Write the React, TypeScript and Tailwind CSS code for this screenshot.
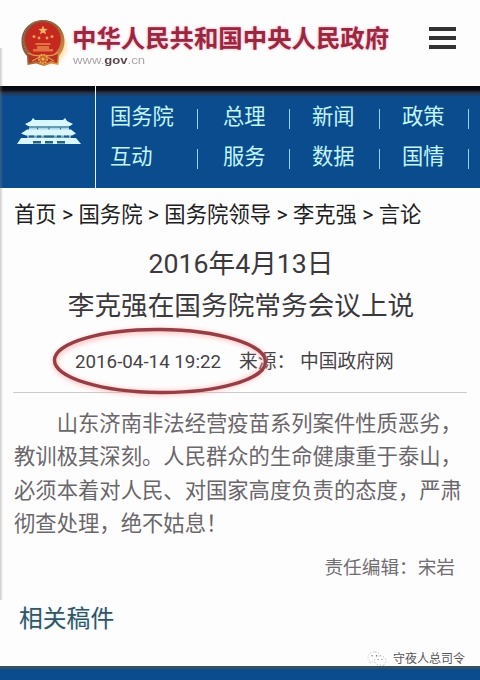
import React from "react";

const cjk = "font-['Roboto','Noto_Sans_CJK_SC',sans-serif]";

const navRows = [
  ["国务院", "总理", "新闻", "政策"],
  ["互动", "服务", "数据", "国情"],
];

const bodyLines = [
  "山东济南非法经营疫苗系列案件性质恶劣，",
  "教训极其深刻。人民群众的生命健康重于泰山，",
  "必须本着对人民、对国家高度负责的态度，严肃",
  "彻查处理，绝不姑息！",
];

function Emblem() {
  return (
    <svg width="50" height="52" viewBox="0 0 50 52" className="shrink-0">
      <defs>
        <linearGradient id="rim" x1="0" y1="0" x2="1" y2="1">
          <stop offset="0" stopColor="#6f5a4c" />
          <stop offset="0.5" stopColor="#9c5d38" />
          <stop offset="1" stopColor="#f2a347" />
        </linearGradient>
        <filter id="soft" x="-20%" y="-20%" width="140%" height="140%">
          <feGaussianBlur stdDeviation="1.8" />
        </filter>
      </defs>
      <ellipse cx="27" cy="28" rx="20" ry="19" fill="#ffd58a" opacity="0.6" filter="url(#soft)" />
      <path d="M23 2C35 2 44.500 11 44.500 23C44.500 30 42 34 39 38L38.500 47L31 45.500L24 48L16 45.500L7.500 47L7 38C3 34 1.500 29 1.500 23C1.500 11 11 2 23 2Z" fill="url(#rim)" />
      <circle cx="23" cy="22" r="19.500" fill="none" stroke="#c07a3c" strokeWidth="0.900" strokeDasharray="2 1.500" />
      <circle cx="23" cy="22" r="17.800" fill="#c4281f" />
      <path d="M23 7.500l1.300 3.200 3.400.2-2.600 2.100 1 3.300-3.100-1.900-3 1.900.9-3.300-2.600-2.100 3.400-.2z" fill="#ffb469" />
      <g fill="#f39a55">
        <circle cx="14" cy="18.500" r="1.500" /><circle cx="19" cy="20" r="1.400" />
        <circle cx="27" cy="20" r="1.400" /><circle cx="32" cy="18.500" r="1.500" />
        <path d="M16 25h14l1 2H15zM17 28h12v3h4v2.500H13V31h4z" opacity=".65" />
      </g>
      <path d="M8 35Q15 40 23 35Q31 40 38 35L37 45L31 43L24 46L16 43L9 45Z" fill="#b53322" />
      <path d="M8 35Q15 39 23 37Q31 39 38 35M12 43L20 39M34 43L27 39" fill="none" stroke="#e09848" strokeWidth="1.300" />
      <circle cx="23" cy="41" r="4.200" fill="#c9662b" stroke="#f2a94f" strokeWidth="1.600" strokeDasharray="1.800 1" />
      <circle cx="23" cy="41" r="1.500" fill="#f2b254" />
    </svg>
  );
}

function Gate() {
  return (
    <svg width="66" height="28" viewBox="0 0 66 28">
      <g fill="#d8f7ff">
        <path d="M17 1L19 3H47L49 1L51 4L57 7L54 9H12L9 7L15 4Z" />
        <path d="M13 9H53V13H13Z" opacity=".8" />
        <path d="M11 12.500H55L60 16.500L56 18.500H10L5 16.500Z" />
        <path d="M11 18H55V22H11Z" opacity=".55" />
        <path d="M5 21H60L65 27H1Z" />
      </g>
      <g fill="#25637f">
        <path d="M13 9.500H53V10.500H13ZM13 18.500H18V20.500H13ZM21 18.500H25V20.500H21ZM28 18.500H38V20.500H28ZM41 18.500H45V20.500H41ZM48 18.500H53V20.500H48Z" />
        <path d="M17 24H25V26.500H17ZM29 24H37V26.500H29ZM41 24H49V26.500H41Z" />
        <path d="M21 10.500H22V12.500H21ZM32.500 10.500H33.500V12.500H32.500ZM44 10.500H45V12.500H44Z" />
      </g>
    </svg>
  );
}

function WeChat() {
  return (
    <svg width="20" height="16" viewBox="0 0 20 16" fill="#ffffff" stroke="#9a9a9a" strokeWidth="0.600" strokeDasharray="1.300 1.700">
      <path d="M7.500 1C3.500 1 1 3.300 1 6c0 1.700 1 3 2.300 4L3 12l2.300-1.200c3.700 1 8.200-.8 8.200-4.800C13.500 3 11 1 7.500 1z" />
      <path d="M13 5c3.300 0 6 2 6 4.700 0 1.500-.8 2.600-2 3.500l.4 1.800-2.200-1.100C11.500 14.800 7.500 13 7.500 9.700 7.500 7 10 5 13 5z" />
      <g fill="#666" stroke="none">
        <circle cx="5" cy="4.800" r=".7" /><circle cx="9.500" cy="4.800" r=".7" />
        <circle cx="11.200" cy="8.500" r=".6" /><circle cx="15" cy="8.500" r=".6" />
      </g>
    </svg>
  );
}

export default function App() {
  return (
    <div className={`relative flex h-[680px] w-[480px] flex-col overflow-hidden bg-[#fefdfe] ${cjk}`}>
      <header className="flex h-[86px] shrink-0 items-start pl-5 pr-6">
        <div className="pt-[18px]">
          <Emblem />
        </div>
        <div className="ml-0.5 flex-1 pt-[23px]">
          <h1 className="whitespace-nowrap text-[24.4px] font-bold leading-8 text-[#98283f] [text-shadow:0_0_3px_#ff9db5]">
            中华人民共和国中央人民政府
          </h1>
          <div className="ml-px origin-left scale-x-[1.19] font-['Liberation_Sans',sans-serif] text-[11px] leading-[10px] text-[#aaa3a8]">
            www.<b className="text-[#5b4650]">gov</b>.cn
          </div>
        </div>
        <div className="mt-[27px] flex w-[27px] flex-col gap-[5px]">
          <i className="h-1 bg-[#333]" />
          <i className="h-1 bg-[#333]" />
          <i className="h-1 bg-[#333]" />
        </div>
      </header>

      <nav className="flex h-[102px] shrink-0 bg-[#0b4c8f] bg-[linear-gradient(#06070f_0,#0b0d16_4px,#28364f_7px,#0b4c8f_11px)]">
        <div className="flex w-[95px] items-start pl-4 pt-[31px]">
          <Gate />
        </div>
        <div className="w-px bg-[#e4f4ff]" />
        <div className="flex flex-col pl-3.5 pt-[11px]">
          {navRows.map((row) => (
            <div key={row[0]} className="grid h-10 grid-cols-[113px_89px_90px_67px] items-center text-[21.3px] leading-10 text-[#c3f5f7]">
              {row.map((t, i) => (
                <div key={t} className="flex items-center justify-between">
                  <span>{t}</span>
                  <span className={`mt-[3px] h-5 w-[1.5px] bg-[#8fd6ee] ${i === 3 ? "mr-0" : i === 0 ? "mr-[25px]" : "mr-[22px]"}`} />
                </div>
              ))}
            </div>
          ))}
        </div>
      </nav>

      <main className="flex flex-1 flex-col">
        <div className="mt-[11px] whitespace-pre pl-[14px] text-[21.36px] leading-8 text-[#202020]">
          首页 &gt; 国务院 &gt; 国务院领导 &gt; 李克强 &gt; 言论
        </div>
        <h2 className="mt-3 pl-[2px] text-center text-[26.67px] font-normal leading-[42px] text-[#3c393c]">
          2016年4月13日
          <br />
          李克强在国务院常务会议上说
        </h2>
        <div className="mx-[13px] flex h-[66px] items-start border-b border-[#ccc] pl-[62px] pt-[21px] text-[18.75px] leading-7 text-[#464346]">
          <span className="w-[164px]">2016-04-14 19:22</span>
          <span className="w-[61px]">来源：</span>
          <span>中国政府网</span>
        </div>
        <div className="mt-[14px] pl-[14px] text-[21.33px] leading-[33.4px] text-[#6a676a]">
          {bodyLines.map((l, i) => (
            <p key={l} className={`whitespace-nowrap ${i === 0 ? "indent-[2em]" : ""}`}>{l}</p>
          ))}
        </div>
        <div className="mt-[13px] pr-[25px] text-right text-[18.67px] leading-7 text-[#706d70]">责任编辑：宋岩</div>
        <h3 className="mt-[19px] pl-[19px] text-[23.8px] font-normal leading-9 text-[#36545f] [text-shadow:0_0_3px_#cdefff]">相关稿件</h3>
      </main>

      <footer className="h-[14px] shrink-0 border-t-[3px] border-[#34505f] bg-[#0b4c8f]" />

      <svg className="absolute left-[40px] top-[316px]" width="240" height="90" viewBox="0 0 240 90" fill="none">
        <defs>
          <filter id="glow" x="-10%" y="-20%" width="120%" height="140%">
            <feGaussianBlur stdDeviation="2.500" />
          </filter>
        </defs>
        <ellipse cx="120" cy="46" rx="105" ry="31" stroke="#ff9a96" strokeWidth="5" opacity="0.6" filter="url(#glow)" />
        <ellipse cx="120" cy="45" rx="105.500" ry="31.500" stroke="#963e46" strokeWidth="3.400" transform="rotate(0.500 120 45)" />
      </svg>
      <div className="absolute left-0 top-[48px] h-[552px] w-[3px] bg-gradient-to-r from-[#80808066] to-transparent" />
      <div className="absolute left-[367px] top-[651px] flex items-center gap-1.5">
        <WeChat />
        <span className="text-[12px] leading-4 text-[#555]">守夜人总司令</span>
      </div>
    </div>
  );
}
